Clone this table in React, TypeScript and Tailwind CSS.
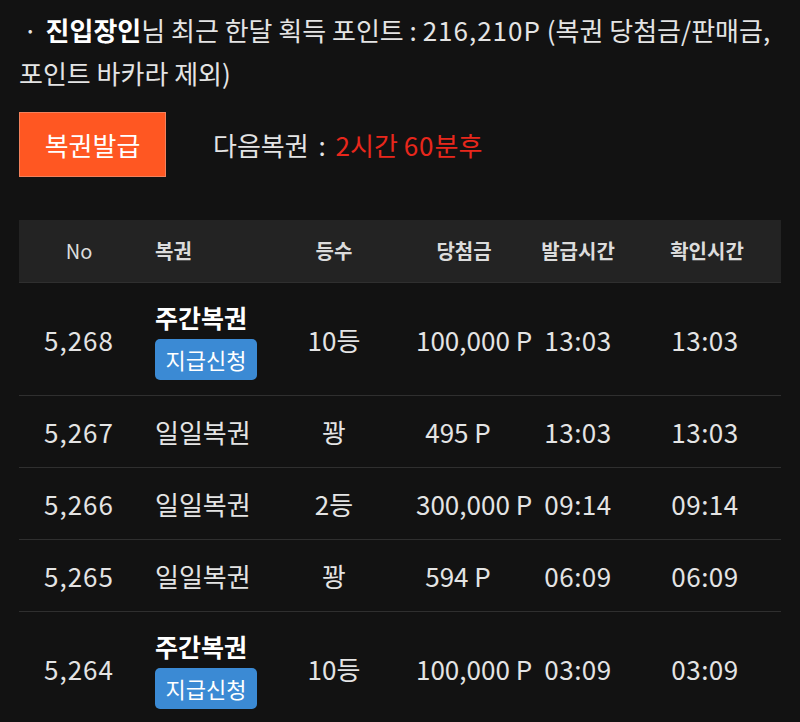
import React from "react";

type Row = {
  no: string;
  name: string;
  weekly?: boolean;
  rank: string;
  prize: string;
  issued: string;
  checked: string;
};

const rows: Row[] = [
  { no: "5,268", name: "주간복권", weekly: true, rank: "10등", prize: "100,000 P", issued: "13:03", checked: "13:03" },
  { no: "5,267", name: "일일복권", rank: "꽝", prize: "495 P", issued: "13:03", checked: "13:03" },
  { no: "5,266", name: "일일복권", rank: "2등", prize: "300,000 P", issued: "09:14", checked: "09:14" },
  { no: "5,265", name: "일일복권", rank: "꽝", prize: "594 P", issued: "06:09", checked: "06:09" },
  { no: "5,264", name: "주간복권", weekly: true, rank: "10등", prize: "100,000 P", issued: "03:09", checked: "03:09" },
];

const grid = "grid grid-cols-[120px_151px_88px_160px_80px_163px] items-center";

export default function App() {
  return (
    <div
      className="min-h-[722px] w-[800px] overflow-hidden bg-[#121212] text-[#e4e4e4]"
      style={{ fontFamily: '"Noto Sans CJK KR", "Noto Sans", sans-serif' }}
    >
      <p className="px-[19px] pt-[8px] text-[26px] leading-[43px]">
        <span className="pl-[4px] pr-[8px]">·</span>
        <span className="font-bold text-white">진입장인</span>님 최근 한달 획득 포인트 :{" "}
        <span className="tracking-[1px]">216,210P</span> (복권 당첨금/판매금, 포인트 바카라 제외)
      </p>

      <div className="mt-[18px] flex items-center gap-[47px] px-[19px]">
        <button className="h-[65px] w-[147px] border border-[#f3815c] bg-[#ff5722] text-[26px] text-white">
          복권발급
        </button>
        <div className="text-[26px]">
          다음복권 <span className="px-[4px]">:</span>{" "}
          <span className="text-[#e8271c]">
            2시간 <span className="tracking-[1px]">60</span>분후
          </span>
        </div>
      </div>

      <div className="mx-[19px] mt-[43px]">
        <div className={`${grid} h-[63px] border-b border-[#2f2f2f] bg-[#232323] text-[20px] font-semibold text-[#dcdcdc]`}>
          <div className="text-center font-normal">No</div>
          <div className="pl-[16px]">복권</div>
          <div className="text-center">등수</div>
          <div className="pl-[44px] pr-[32px] text-center">당첨금</div>
          <div className="text-center">발급시간</div>
          <div className="pl-[15px] text-center">확인시간</div>
        </div>

        {rows.map((r) => (
          <div
            key={r.no}
            className={`${grid} border-b border-[#2f2f2f] text-[26px] ${r.weekly ? "h-[113px]" : "h-[72px]"}`}
          >
            <div className="text-center tracking-[1px]">{r.no}</div>
            <div className="pl-[16px]">
              {r.weekly ? (
                <div className="flex flex-col items-start pt-[2px]">
                  <span className="text-[25px] font-bold leading-[32px] text-white">{r.name}</span>
                  <span className="mt-[6px] flex h-[41px] w-[102px] items-center justify-center rounded-[5px] bg-[#3b8ad4] text-[22px] text-white">
                    지급신청
                  </span>
                </div>
              ) : (
                r.name
              )}
            </div>
            <div className="text-center">{r.rank}</div>
            <div className="whitespace-nowrap px-[38px] text-center">{r.prize}</div>
            <div className="text-center tracking-[0.5px]">{r.issued}</div>
            <div className="pl-[11px] text-center tracking-[0.5px]">{r.checked}</div>
          </div>
        ))}
      </div>
    </div>
  );
}
